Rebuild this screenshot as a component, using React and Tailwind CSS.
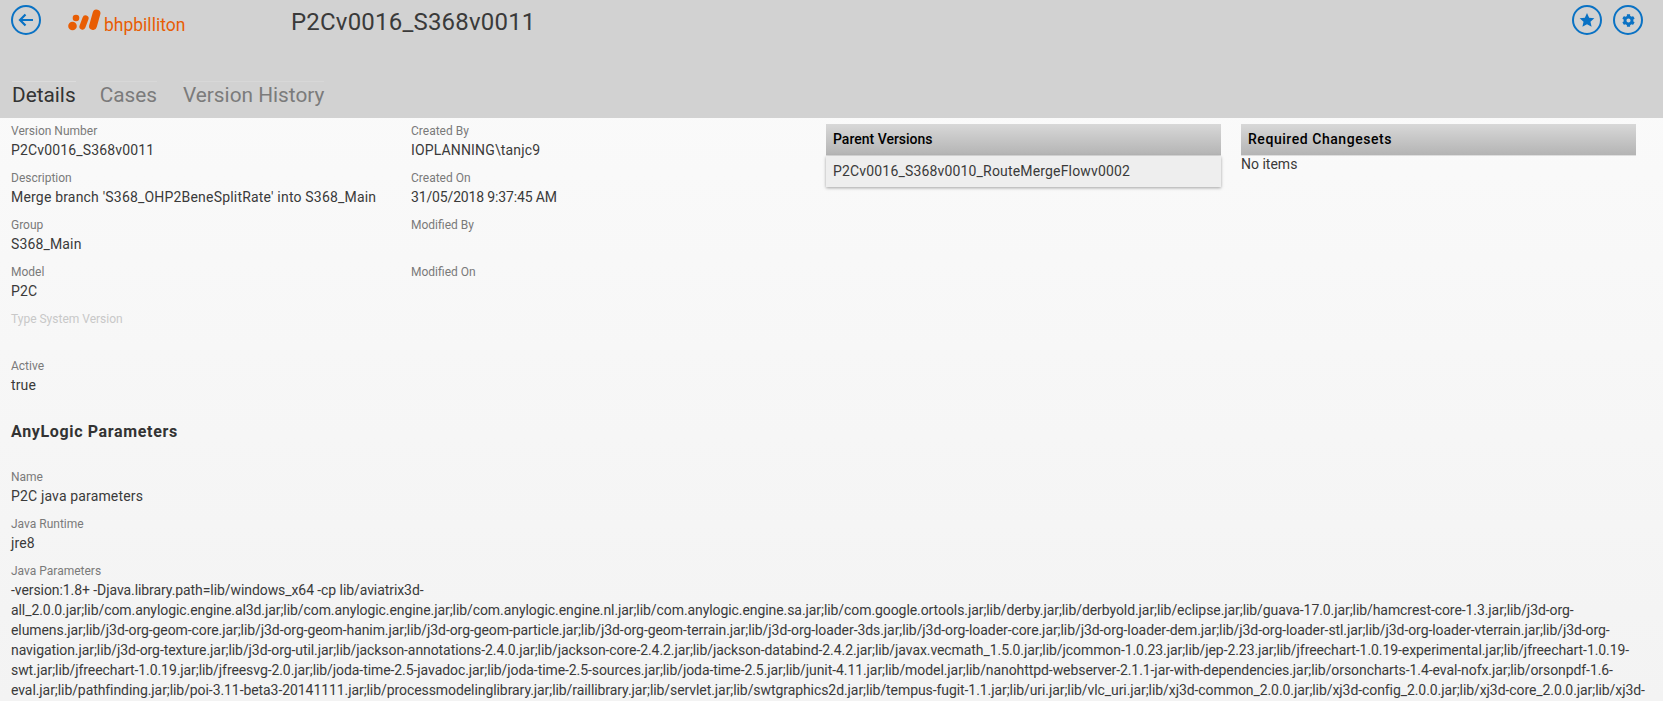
import React from "react";
import { FaCog } from "react-icons/fa";

const Field = ({ label, value, faint, valueClass = "mt-[2px] tracking-[0.15px]" }) => (
  <div className="h-[47px] pt-[6px]">
    <div className={`text-[12px] leading-[14px] ${faint ? "text-[#c8c8c8]" : "text-[#7a7a7a]"}`}>{label}</div>
    <div className={`text-[14px] leading-[20px] text-[#3a3a3a] ${valueClass}`}>{value}</div>
  </div>
);

const Panel = ({ title, titleClass = "", children }) => (
  <div className="w-[395px]">
    <div className={`h-[32px] pl-[7px] flex items-center bg-gradient-to-b from-[#d8d8d8] to-[#b4b4b4] border-b border-[#dedede] text-[14px] font-medium text-black ${titleClass}`}>
      {title}
    </div>
    {children}
  </div>
);

const Round = ({ children }) => (
  <div className="w-[30px] h-[30px] rounded-full border-2 border-[#0a72c4] flex items-center justify-center text-[#0a72c4]">
    {children}
  </div>
);

const JAVA =
  "-version:1.8+ -Djava.library.path=lib/windows_x64 -cp lib/aviatrix3d-all_2.0.0.jar;lib/com.anylogic.engine.al3d.jar;lib/com.anylogic.engine.jar;lib/com.anylogic.engine.nl.jar;lib/com.anylogic.engine.sa.jar;lib/com.google.ortools.jar;lib/derby.jar;lib/derbyold.jar;lib/eclipse.jar;lib/guava-17.0.jar;lib/hamcrest-core-1.3.jar;lib/j3d-org-elumens.jar;lib/j3d-org-geom-core.jar;lib/j3d-org-geom-hanim.jar;lib/j3d-org-geom-particle.jar;lib/j3d-org-geom-terrain.jar;lib/j3d-org-loader-3ds.jar;lib/j3d-org-loader-core.jar;lib/j3d-org-loader-dem.jar;lib/j3d-org-loader-stl.jar;lib/j3d-org-loader-vterrain.jar;lib/j3d-org-navigation.jar;lib/j3d-org-texture.jar;lib/j3d-org-util.jar;lib/jackson-annotations-2.4.0.jar;lib/jackson-core-2.4.2.jar;lib/jackson-databind-2.4.2.jar;lib/javax.vecmath_1.5.0.jar;lib/jcommon-1.0.23.jar;lib/jep-2.23.jar;lib/jfreechart-1.0.19-experimental.jar;lib/jfreechart-1.0.19-swt.jar;lib/jfreechart-1.0.19.jar;lib/jfreesvg-2.0.jar;lib/joda-time-2.5-javadoc.jar;lib/joda-time-2.5-sources.jar;lib/joda-time-2.5.jar;lib/junit-4.11.jar;lib/model.jar;lib/nanohttpd-webserver-2.1.1-jar-with-dependencies.jar;lib/orsoncharts-1.4-eval-nofx.jar;lib/orsonpdf-1.6-eval.jar;lib/pathfinding.jar;lib/poi-3.11-beta3-20141111.jar;lib/processmodelinglibrary.jar;lib/raillibrary.jar;lib/servlet.jar;lib/swtgraphics2d.jar;lib/tempus-fugit-1.1.jar;lib/uri.jar;lib/vlc_uri.jar;lib/xj3d-common_2.0.0.jar;lib/xj3d-config_2.0.0.jar;lib/xj3d-core_2.0.0.jar;lib/xj3d-eax_2.0.0.jar;lib/xj3d-ecmascript_2.0.0.jar";

export default function App() {
  return (
    <div className="h-[701px] overflow-hidden bg-gradient-to-b from-[#fbfbfb] to-[#f3f3f3] font-['Roboto',sans-serif]">
      <header className="h-[118px] bg-[#d2d2d2] pl-[11px] pr-[20px] flex flex-col justify-between">
        <div className="flex items-start pt-[5px]">
          <Round>
            <svg width="18" height="18" viewBox="0 0 18 18" fill="none" stroke="currentColor" strokeWidth="2.2">
              <path d="M16 9H3M8.500 3.500 3 9l5.500 5.500" />
            </svg>
          </Round>
          <div className="ml-[27px] mt-[4px] flex items-start w-[223px]">
            <svg width="33" height="23" viewBox="0 0 33 23" fill="#e85d04" stroke="#e85d04" strokeLinecap="round" className="shrink-0">
              <circle cx="4.500" cy="17" r="4.300" stroke="none" />
              <circle cx="8" cy="9" r="3.300" stroke="none" />
              <path d="M14.500 17.500 17.500 9.500" strokeWidth="6.200" />
              <path d="M25 17 28.500 4.500" strokeWidth="7.800" />
            </svg>
            <span className="ml-[3px] mt-[6px] text-[17.500px] leading-[20px] text-[#e85d04]">bhpbilliton</span>
          </div>
          <h1 className="mt-[1px] text-[24px] leading-[32px] tracking-[0.2px] font-normal text-[#3a3a3a]">P2Cv0016_S368v0011</h1>
          <div className="ml-auto flex gap-[11px]">
            <Round>
              <svg width="16" height="16" viewBox="0 0 24 24" fill="currentColor">
                <path d="M12 1.500l3.200 7.100 7.800.8-5.800 5.200 1.700 7.600L12 18.300l-6.900 3.900 1.700-7.600L1 9.400l7.800-.8z" />
              </svg>
            </Round>
            <Round>
              <FaCog size={13} />
            </Round>
          </div>
        </div>
        <nav className="flex gap-[24px] pl-[1px] text-[20.800px] leading-[26px] h-[37px] text-[#7b7b7b]">
          <span className="border-t border-[#dcdcdc] h-[27px] text-[#333]">Details</span>
          <span className="border-t border-[#d8d8d8] h-[27px]">Cases</span>
          <span className="ml-[2px] border-t border-[#d8d8d8] h-[27px]">Version History</span>
        </nav>
      </header>

      <main className="pl-[11px] pr-[10px]">
        <div className="flex">
          <div className="w-[400px]">
            <Field label="Version Number" value="P2Cv0016_S368v0011" />
            <Field label="Description" value="Merge branch 'S368_OHP2BeneSplitRate' into S368_Main" valueClass="mt-[2px] tracking-[0.19px]" />
            <Field label="Group" value="S368_Main" />
            <Field label="Model" value="P2C" />
            <Field label="Type System Version" value="" faint />
            <Field label="Active" value="true" />
          </div>
          <div className="w-[415px]">
            <Field label="Created By" value="IOPLANNING\tanjc9" />
            <Field label="Created On" value="31/05/2018 9:37:45 AM" valueClass="mt-[2px] tracking-[-0.15px]" />
            <Field label="Modified By" value="" />
            <Field label="Modified On" value="" />
          </div>
          <div className="flex gap-[20px] pt-[6px]">
            <Panel title="Parent Versions">
              <div className="h-[31px] pl-[7px] flex items-center bg-[#eeeeee] shadow-[0_1px_3px_rgba(0,0,0,0.35)] text-[14px] tracking-[0.17px] text-[#3a3a3a]">
                P2Cv0016_S368v0010_RouteMergeFlowv0002
              </div>
            </Panel>
            <Panel title="Required Changesets" titleClass="tracking-[0.55px]">
              <div className="text-[14px] leading-[16px] text-[#3a3a3a]">No items</div>
            </Panel>
          </div>
        </div>
        <h2 className="mt-[22px] text-[16px] leading-[20px] tracking-[0.65px] font-bold text-[#333]">AnyLogic Parameters</h2>
        <div className="mt-[22px]">
          <Field label="Name" value="P2C java parameters" />
          <Field label="Java Runtime" value="jre8" />
          <Field label="Java Parameters" value={JAVA} valueClass="mt-[2px] tracking-[-0.075px]" />
        </div>
      </main>
    </div>
  );
}
